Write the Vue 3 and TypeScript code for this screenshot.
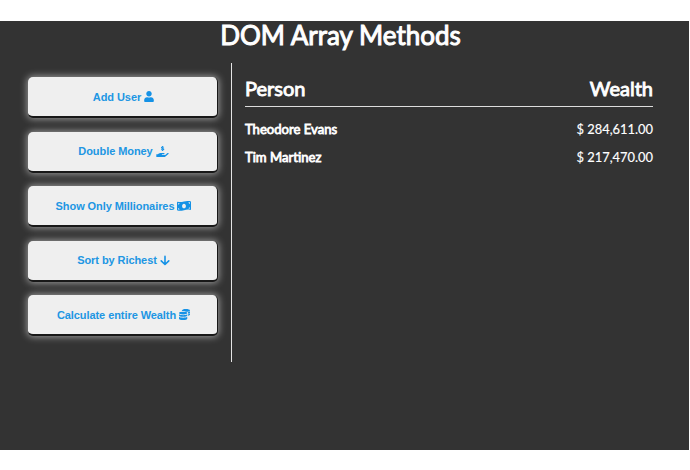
<script setup lang="ts">
interface Action {
  label: string
  icon: 'user' | 'hand' | 'bill' | 'arrow' | 'coins'
}

interface Person {
  name: string
  wealth: number
}

const actions: Action[] = [
  { label: 'Add User', icon: 'user' },
  { label: 'Double Money', icon: 'hand' },
  { label: 'Show Only Millionaires', icon: 'bill' },
  { label: 'Sort by Richest', icon: 'arrow' },
  { label: 'Calculate entire Wealth', icon: 'coins' },
]

const people: Person[] = [
  { name: 'Theodore Evans', wealth: 284611 },
  { name: 'Tim Martinez', wealth: 217470 },
]

const formatMoney = (n: number): string =>
  '$ ' + n.toFixed(2).replace(/\d(?=(\d{3})+\.)/g, '$&,')
</script>

<template>
  <div class="page">
    <h1>DOM Array Methods</h1>
    <div class="container">
      <aside>
        <button v-for="a in actions" :key="a.label" type="button">
          <span class="label">{{ a.label }}</span>
          <svg v-if="a.icon === 'user'" class="icon user" viewBox="0 0 448 512">
            <path d="M224 256c70.700 0 128-57.300 128-128S294.700 0 224 0 96 57.300 96 128s57.300 128 128 128zm89.600 32h-16.700c-22.200 10.200-46.900 16-72.900 16s-50.600-5.800-72.900-16h-16.700C60.200 288 0 348.200 0 422.400V464c0 26.500 21.500 48 48 48h352c26.500 0 48-21.500 48-48v-41.600c0-74.200-60.200-134.400-134.400-134.400z" />
          </svg>
          <svg v-else-if="a.icon === 'hand'" class="icon hand" viewBox="0 0 576 512">
            <path d="M565 328c-12-11-31-10-44 0l-92 74c-11 9-25 14-40 14H272c-9 0-16-7-16-16s7-16 16-16h78c16 0 31-11 34-27 3-20-12-37-32-37H192c-27 0-53 9-74 26l-46 38H16c-9 0-16 7-16 16v96c0 9 7 16 16 16h357c14 0 28-5 40-14l151-121c15-12 16-35 1-49z" />
            <path class="stroke" d="M348 66c-18-20-108-23-108 18 0 42 110 18 110 65 0 40-94 36-114 10M292 0v50M292 174v56" />
          </svg>
          <svg v-else-if="a.icon === 'bill'" class="icon bill" viewBox="0 0 640 448" preserveAspectRatio="none">
            <path fill-rule="evenodd" d="M612 10C520-12 420 2 320 24S120 58 40 36C18 30 0 42 0 62v328c0 16 10 28 28 34 92 22 192 8 292-14s200-34 280-12c22 6 40-6 40-26V44c0-16-10-28-28-34zM320 328c-50 0-88-46-88-104s38-104 88-104 88 46 88 104-38 104-88 104zM48 100c26 5 48 6 72 5-4 32-34 54-72 55zm0 278v-56c38 0 66 28 70 64-24 0-48-3-70-8zm544-92c-34-2-60 20-66 54 24 0 46 2 66 6zm0-164c-38-2-66-32-68-68 24 0 46 2 68 6z" />
          </svg>
          <svg v-else-if="a.icon === 'arrow'" class="icon arrow" viewBox="0 0 448 512">
            <path class="stroke" d="M224 66v372M48 272l176 172 176-172" />
          </svg>
          <svg v-else class="icon coins" viewBox="0 0 512 512">
            <path d="M320 0c106 0 192 29 192 64s-82 64-188 64c-28-22-78-36-140-36-20 0-39 1-56 4C128 29 214 0 320 0z" />
            <path d="M512 107v53c0 25-39 45-96 56v-63c39-8 74-24 96-46zM512 203v53c0 25-39 45-96 56v-61c39-8 74-24 96-48z" />
            <ellipse cx="192" cy="190" rx="192" ry="62" />
            <path d="M0 250c41 31 117 43 192 43s151-12 192-43v48c0 35-86 64-192 64S0 333 0 298z" />
            <path d="M0 362c41 28 117 42 192 42s151-14 192-42v86c0 35-86 64-192 64S0 483 0 448z" />
          </svg>
        </button>
      </aside>
      <main>
        <h2><span>Person</span><span>Wealth</span></h2>
        <div v-for="p in people" :key="p.name" class="person">
          <strong>{{ p.name }}</strong>
          <span class="amount">{{ formatMoney(p.wealth) }}</span>
        </div>
      </main>
    </div>
  </div>
</template>

<style>
body {
  margin: 0;
  background: #fff;
}
</style>

<style scoped>
.page {
  box-sizing: border-box;
  width: 689px;
  height: 429px;
  margin-top: 21px;
  background: #333;
  color: #fff;
  font-family: Lato, sans-serif;
}

h1 {
  margin: 0;
  padding-right: 8px;
  height: 42px;
  font-size: 26px;
  line-height: 29px;
  font-weight: 400;
  -webkit-text-stroke: 1px #fff;
  text-align: center;
}

.container {
  display: flex;
  height: 299px;
  padding: 0 36px 0 28px;
}

aside {
  box-sizing: border-box;
  display: flex;
  flex-direction: column;
  gap: 13.5px;
  width: 204px;
  padding: 14px 13px 0 0;
  border-right: 1px solid #e4e4e4;
}

button {
  box-sizing: border-box;
  display: flex;
  flex: none;
  align-items: center;
  justify-content: center;
  gap: 3px;
  width: 190px;
  height: 41px;
  padding: 0 0 0 2px;
  border: 0 solid #181818;
  border-width: 0 1.500px 2px 0;
  border-radius: 5px;
  background: #efefef;
  box-shadow: 0 0 7px 1px rgba(255, 255, 255, 0.5);
  color: #2196e3;
  font: bold 11px/14px "Liberation Sans", Arial, sans-serif;
  letter-spacing: -0.07px;
}

.icon {
  flex: none;
  height: 11px;
  fill: #1592e6;
}

.user { width: 10px; }
.hand { width: 13px; }
.bill { width: 14px; height: 10px; }
.arrow { width: 10px; }
.coins { width: 11px; }

.stroke {
  fill: none;
  stroke: #1592e6;
  stroke-width: 50;
}

.arrow .stroke {
  stroke-width: 74;
  stroke-linecap: round;
  stroke-linejoin: round;
}

main {
  flex: 1;
  padding: 12px 0 0 13px;
}

h2 {
  box-sizing: border-box;
  display: flex;
  justify-content: space-between;
  height: 32px;
  margin: 0 0 8px;
  border-bottom: 1px solid #ddd;
  font-size: 20px;
  line-height: 27px;
  font-weight: 400;
  -webkit-text-stroke: 0.9px #fff;
}

.person {
  display: flex;
  justify-content: space-between;
  height: 28px;
  font-size: 13px;
  line-height: 28px;
}

.person strong {
  font-size: 13.1px;
  font-weight: 400;
  -webkit-text-stroke: 0.8px #fff;
}

.amount {
  font-size: 12.900px;
  -webkit-text-stroke: 0.15px #fff;
}
</style>
